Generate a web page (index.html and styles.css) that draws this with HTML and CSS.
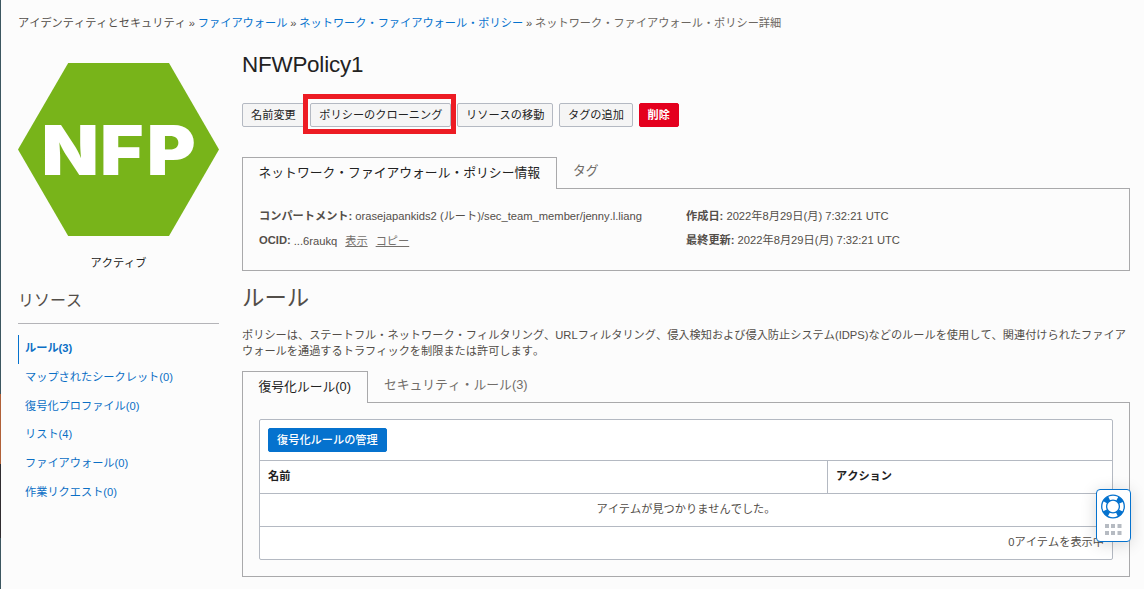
FILE: index.html
```
<!DOCTYPE html>
<html lang="ja">
<head>
<meta charset="utf-8">
<title>NFWPolicy1</title>
<link rel="stylesheet" href="styles.css">
</head>
<body>
<div class="page">
  <nav class="crumbs">
    <span>アイデンティティとセキュリティ</span><i>»</i><a>ファイアウォール</a><i>»</i><a>ネットワーク・ファイアウォール・ポリシー</a><i>»</i><span class="current">ネットワーク・ファイアウォール・ポリシー詳細</span>
  </nav>
  <div class="columns">
    <aside class="sidebar">
      <svg class="hexagon" viewBox="0 0 201 173" width="201" height="173">
        <polygon points="50.2,0 151,0 201,86.5 151,173 50.2,173 0,86.5" fill="#78b41a"/>
        <text transform="scale(1.08 1)" x="21.8 76 119.2" y="112">NFP</text>
      </svg>
      <div class="status">アクティブ</div>
      <h2 class="side-title">リソース</h2>
      <ul class="side-nav">
        <li class="active">ルール(3)</li>
        <li>マップされたシークレット(0)</li>
        <li>復号化プロファイル(0)</li>
        <li>リスト(4)</li>
        <li>ファイアウォール(0)</li>
        <li>作業リクエスト(0)</li>
      </ul>
    </aside>
    <main class="main">
      <h1 class="title">NFWPolicy1</h1>
      <div class="actions">
        <button class="btn">名前変更</button>
        <button class="btn marked">ポリシーのクローニング</button>
        <button class="btn">リソースの移動</button>
        <button class="btn">タグの追加</button>
        <button class="btn danger">削除</button>
      </div>
      <div class="tabs">
        <div class="tab selected">ネットワーク・ファイアウォール・ポリシー情報</div>
        <div class="tab">タグ</div>
      </div>
      <section class="panel info">
        <div>
          <p><b>コンパートメント:</b> orasejapankids2 (ルート)/sec_team_member/jenny.l.liang</p>
          <p class="ocid"><b>OCID:</b><span>...6raukq</span><a>表示</a><a>コピー</a></p>
        </div>
        <div>
          <p><b>作成日:</b> 2022年8月29日(月) 7:32:21 UTC</p>
          <p><b>最終更新:</b> 2022年8月29日(月) 7:32:21 UTC</p>
        </div>
      </section>
      <h2 class="section-title">ルール</h2>
      <p class="description">ポリシーは、ステートフル・ネットワーク・フィルタリング、URLフィルタリング、侵入検知および侵入防止システム(IDPS)などのルールを使用して、関連付けられたファイア<br>ウォールを通過するトラフィックを制限または許可します。</p>
      <div class="tabs">
        <div class="tab selected">復号化ルール(0)</div>
        <div class="tab">セキュリティ・ルール(3)</div>
      </div>
      <section class="panel rules">
        <div class="table">
          <div class="toolbar"><button class="btn primary">復号化ルールの管理</button></div>
          <div class="row head"><div>名前</div><div>アクション</div></div>
          <div class="row empty">アイテムが見つかりませんでした。</div>
          <div class="row foot">0アイテムを表示中</div>
        </div>
      </section>
    </main>
  </div>
  <div class="help">
    <svg width="33" height="50" viewBox="0 0 33 50">
      <circle cx="16" cy="16.5" r="8.9" fill="none" stroke="#0572ce" stroke-width="5" stroke-dasharray="5.6 8.38" stroke-dashoffset="-4.19"/>
      <circle cx="16" cy="16.5" r="11.3" fill="none" stroke="#0572ce" stroke-width="1.3"/>
      <circle cx="16" cy="16.5" r="6.4" fill="#fff" stroke="#0572ce" stroke-width="1.3"/>
      <g fill="#b6bbc2">
        <rect x="8" y="34" width="4" height="4"/><rect x="14" y="34" width="4" height="4"/><rect x="20.5" y="34" width="4" height="4"/>
        <rect x="8" y="41" width="4" height="4"/><rect x="14" y="41" width="4" height="4"/><rect x="20.5" y="41" width="4" height="4"/>
      </g>
    </svg>
  </div>
</div>
</body>
</html>
```
FILE: styles.css
```
* { box-sizing: border-box; }
body {
  margin: 0;
  background: #fcfcfc;
  color: #534e49;
  font: 11.2px/16px "Liberation Sans", "Noto Sans CJK JP", sans-serif;
  font-kerning: none;
}
h1, h2, p, ul { margin: 0; padding: 0; font-weight: 400; }
.page {
  position: relative;
  height: 589px;
  overflow: hidden;
  padding: 16px 14px 0 18px;
  background: linear-gradient(#3c5660 0 394px, #b06038 394px 464px, #302c30 464px 538px, #3c5660 538px) 0 0 / 1px 100% no-repeat;
}
.crumbs { display: flex; height: 16px; line-height: 15px; white-space: nowrap; }
.crumbs i { width: 12px; text-align: center; font-style: normal; font-weight: 400; }
.crumbs a { color: #0572ce; }
.crumbs .current { color: #6b6661; }
.columns { display: flex; gap: 23px; }
.sidebar { width: 201px; padding-top: 31px; flex: none; }
.hexagon { display: block; }
.hexagon text { font: 900 69px Inter, sans-serif; fill: #fff; }
.status { margin-top: 19px; text-align: center; color: #222; }
.side-title { margin-top: 18px; height: 35px; font-size: 16px; line-height: 24px; border-bottom: 1px solid #b4b4b8; }
.side-nav { margin-top: 11px; list-style: none; color: #0b6fc5; }
.side-nav li { height: 28.8px; line-height: 27px; padding-left: 7px; }
.side-nav .active { font-weight: 700; border-left: 1px solid #0572ce; padding-left: 6px; }
.main { width: 888px; }
.title { margin-top: 20px; height: 26px; font-size: 22.4px; line-height: 26px; letter-spacing: -.2px; color: #222; }
.actions { display: flex; gap: 5.6px; margin-top: 25px; }
.btn {
  height: 24px;
  padding: 0 8px;
  border: 1px solid #b4b9c2;
  border-radius: 2px;
  background: #f5f5f5;
  color: #222;
  font: inherit;
  font-kerning: none;
  line-height: 22px;
  white-space: nowrap;
}
.danger { background: #e4001e; border-color: #e4001e; color: #fff; font-weight: 700; }
.primary { background: #0572ce; border-color: #0572ce; color: #fff; font-weight: 500; }
.marked { position: relative; }
.marked::after {
  content: "";
  position: absolute;
  inset: -10px -5.4px -8px -8.4px;
  border: 5px solid #ed1c24;
}
.tabs { display: flex; height: 32px; margin-bottom: -1px; position: relative; font-size: 12.8px; }
.actions + .tabs { margin-top: 30px; }
.tab { padding: 0 16px; line-height: 28px; color: #716d69; }
.selected { border: 1px solid #a9a9ab; border-bottom: 0; background: #fcfcfc; color: #222; line-height: 29px; padding: 0 16px 0 15.5px; }
.panel { border: 1px solid #a9a9ab; }
.info { display: grid; grid-template-columns: 427px 1fr; height: 83px; padding: 15px 16px; }
.info p { height: 24px; line-height: 24px; white-space: nowrap; }
.ocid { display: flex; }
.ocid span { margin: 1px 0 0 3px; }
.ocid a { margin: 1px 0 0 8px; color: #75716d; text-decoration: underline; }
.section-title { margin-top: 12px; height: 32px; font-size: 22.4px; line-height: 32px; }
.description { margin-top: 12px; height: 44px; white-space: nowrap; }
.rules { height: 175px; padding: 16px; }
.table { width: 854px; height: 141px; border: 1px solid #b4b9c2; border-radius: 2px; background: #fff; }
.toolbar { height: 40px; padding: 8px; }
.row { height: 33px; line-height: 31px; border-top: 1px solid #b4b9c2; }
.head { display: grid; grid-template-columns: 567px 1fr; font-weight: 700; color: #222; }
.head div { padding-left: 8px; }
.head div + div { border-left: 1px solid #b4b9c2; }
.empty { text-align: center; }
.foot { text-align: right; padding-right: 8px; }
.help {
  position: absolute;
  left: 1096px;
  top: 489px;
  width: 35px;
  height: 53px;
  border: 1px solid #0572ce;
  border-radius: 4px;
  background: #fff;
  box-shadow: 0 2px 16px rgba(0, 0, 0, .16);
}
.help svg { display: block; }
```
